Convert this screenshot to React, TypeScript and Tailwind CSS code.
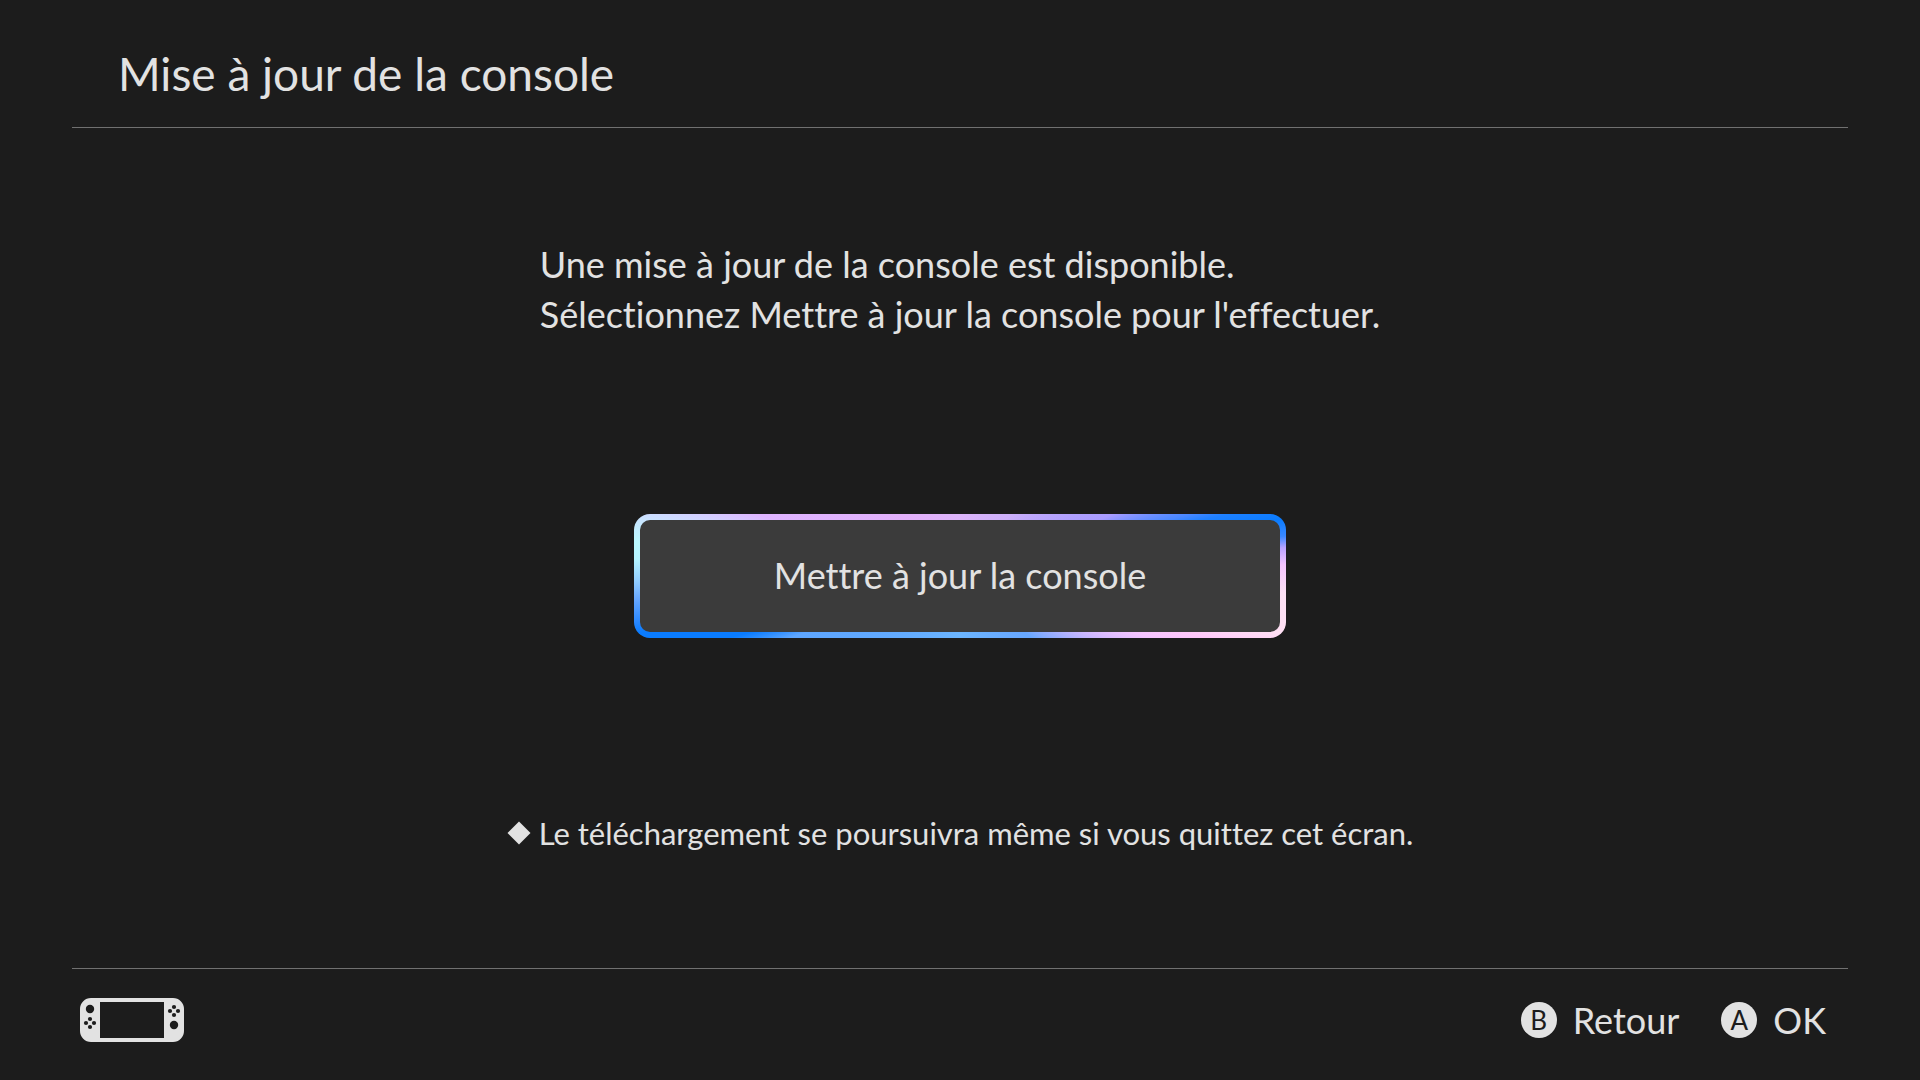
function ConsoleIcon() {
  return (
    <svg
      viewBox="0 0 104 44"
      className="w-[104px] h-11"
      role="img"
      aria-label="Console"
    >
      <path
        fillRule="evenodd"
        fill="#e2e2e2"
        d="M11 0H93A11 11 0 0 1 104 11V33A11 11 0 0 1 93 44H11A11 11 0 0 1 0 33V11A11 11 0 0 1 11 0ZM20 4V40H84V4Z"
      />
      <g fill="#1c1c1c">
        <circle cx="10" cy="11" r="4.2" />
        <circle cx="10" cy="21" r="2.1" />
        <circle cx="6" cy="25" r="2.1" />
        <circle cx="14" cy="25" r="2.1" />
        <circle cx="10" cy="29" r="2.1" />
        <circle cx="94" cy="9" r="2.1" />
        <circle cx="90" cy="13" r="2.1" />
        <circle cx="98" cy="13" r="2.1" />
        <circle cx="94" cy="17" r="2.1" />
        <circle cx="94" cy="27" r="4.2" />
      </g>
    </svg>
  );
}

function Hint({ letter, label }: { letter: string; label: string }) {
  return (
    <button className="flex items-center gap-4">
      <span className="w-9 h-9 rounded-full bg-[#e2e2e2] text-[#1c1c1c] text-[26px] leading-9 text-center">
        {letter}
      </span>
      <span>{label}</span>
    </button>
  );
}

export default function App() {
  return (
    <div className="min-h-screen flex flex-col px-[72px] bg-[#1c1c1c] text-[#e2e2e2] text-[36px] leading-[50px] font-['Lato',sans-serif] [font-variant-ligatures:none]">
      <header className="pt-[46px] pb-[25px] px-[46px] border-b border-[#707070]">
        <h1 className="text-[46px] leading-[56px]">Mise à jour de la console</h1>
      </header>

      <main className="flex-1 flex flex-col items-center pt-[111px]">
        <p>
          Une mise à jour de la console est disponible.
          <br />
          Sélectionnez Mettre à jour la console pour l'effectuer.
        </p>

        <button className="mt-[175px] w-[652px] h-[124px] p-[6px] rounded-[16px] bg-[conic-gradient(#dcb4fa_0deg,#cdb0fa_39deg,#a99cff_68deg,#4a88ff_75deg,#1e80ff_77deg,#0a7cff_80deg,#3a88ff_83deg,#b9a2ff_85deg,#f4c4ff_88deg,#fce0f4_93deg,#ffe0f4_100deg,#ffc8fa_104deg,#f4c4ff_108deg,#d0b8ff_114deg,#9aaeff_122deg,#68a8ff_131deg,#6cb6ff_180deg,#5ea6ff_250deg,#0a7cff_255deg,#0a7cff_260deg,#2a88ff_262deg,#68a8ff_266deg,#90ccff_269deg,#b4f4ff_273deg,#baf8ff_276deg,#c8e4ff_280deg,#dfb4ff_287deg,#e2b0fa_316deg,#dcb4fa_360deg)]">
          <span className="flex items-center justify-center w-full h-full pb-[2px] rounded-[10px] bg-[#3b3b3b]">
            Mettre à jour la console
          </span>
        </button>

        <p className="mt-[175px] flex items-center gap-2 text-[31px] leading-[40px]">
          <svg viewBox="0 0 24 24" className="w-6 h-6" aria-hidden="true">
            <path d="M12 0.5 23.5 12 12 23.5 0.5 12Z" fill="#e2e2e2" />
          </svg>
          Le téléchargement se poursuivra même si vous quittez cet écran.
        </p>
      </main>

      <footer className="flex items-center justify-between h-28 pl-2 pr-[22px] pb-[10px] border-t border-[#707070]">
        <ConsoleIcon />
        <div className="flex gap-[42px]">
          <Hint letter="B" label="Retour" />
          <Hint letter="A" label="OK" />
        </div>
      </footer>
    </div>
  );
}
